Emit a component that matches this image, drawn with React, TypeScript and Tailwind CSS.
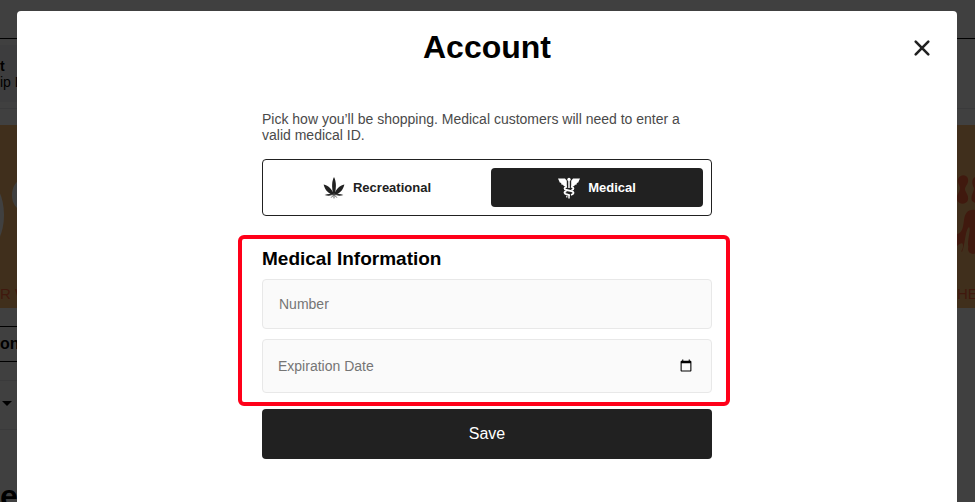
import { useState } from 'react';

type ShopType = 'recreational' | 'medical';

function LeafIcon() {
    return (
        <svg className="h-[22px] w-[22px]" viewBox="0 0 22 22" fill="currentColor" aria-hidden="true">
            <path d="M11 0C13.4 4.500 13.400 11 11.600 17.500h-1.200C8.600 11 8.600 4.500 11 0Z" />
            <path d="M.6 7.500C5.500 8.800 9.400 12.200 10.900 17.800C6.200 17.600 2.200 13.600 .6 7.500Z" />
            <path d="M21.400 7.500C16.500 8.800 12.600 12.200 11.100 17.800C15.800 17.600 19.800 13.600 21.400 7.500Z" />
            <path d="M1.600 18C4.500 16.600 8 16.600 10.900 17.600C8 18.900 4.500 19 1.600 18Z" />
            <path d="M20.400 18C17.500 16.600 14 16.600 11.100 17.600C14 18.900 17.500 19 20.400 18Z" />
            <path d="M11 17v4.400M10.500 18L8.200 20.600M11.500 18l2.300 2.600" stroke="currentColor" strokeWidth=".7" />
        </svg>
    );
}

function CaduceusIcon() {
    return (
        <svg className="h-[22px] w-[22px]" viewBox="0 0 22 22" fill="none" stroke="currentColor" aria-hidden="true">
            <path d="M0 1.500h7L8.800 3.800v5.200H5.800L5 7.800H3.600L3 5.800H1.900Z" fill="currentColor" stroke="none" />
            <path d="M22 1.500h-7L13.200 3.800v5.200h3L17 7.800h1.400L19 5.800h1.100Z" fill="currentColor" stroke="none" />
            <circle cx="11" cy="2.500" r="1.700" fill="currentColor" stroke="none" />
            <path d="M11 4v7M11 18.500v3" strokeWidth="1.500" />
            <path d="M9 9.500C5.800 10.200 5.800 12.400 8.500 13L13.500 14.200C16.400 15 16 17.400 13 17.800" strokeWidth="1.800" />
            <path d="M13 9.500C16.200 10.200 16.200 12.400 13.500 13M8.500 14.200C5.600 15 6 17 9 17.500L12 18.300" strokeWidth="1.800" />
            <path d="M8.200 19.800h1.200" strokeWidth="1.400" />
        </svg>
    );
}

/* Storefront that stays visible around the dialog */
function Storefront() {
    return (
        <div className="h-screen overflow-hidden bg-white text-black" aria-hidden="true">
            <div className="h-[39px] border-b border-black"></div>
            <div className="flex h-[70px] items-start border-b border-gray-200 pt-1.5">
                <div className="h-[57px] w-40 bg-gray-100 pt-[13px]">
                    <p className="text-sm leading-4 font-bold">t</p>
                    <p className="text-sm leading-4">ip D</p>
                </div>
            </div>

            <div className="mt-4 flex h-[183px] flex-col justify-between bg-[#ffbc70]">
                <div className="flex justify-between">
                    <svg className="h-[150px] w-[18px]" viewBox="0 0 18 150">
                        <ellipse cx="-14" cy="90" rx="18" ry="34" fill="#fff" />
                        <ellipse cx="22" cy="70" rx="10" ry="15" fill="#fff" />
                    </svg>
                    <svg className="h-[150px] w-[18px]" viewBox="0 0 18 150" fill="#ff6438">
                        <path d="M1 54C3 49 10 49 11 54C12 59 8 61 8 64C8 67 12 70 11 75C9 80 2 80 0 75V71C1 68 3 66 3 63C3 60 0 58 1 54Z" />
                        <path d="M18 52C14 54 15 60 17 63C17 67 13 71 15 76L18 78Z" />
                        <path d="M18 85C11 84 8 88 7 95C6 103 5 108 0 109V121C4 118 6 117 6 121C6 125 3 126 5 127C8 122 8 105 12 102C14 104 11 112 11 119C11 124 14 126 18 125Z" />
                        <circle cx="16" cy="124" r="5" />
                    </svg>
                </div>
                <div className="flex justify-between pb-1 text-[15px] leading-5 text-[#ff6438]">
                    <span className="whitespace-nowrap">R W</span>
                    <span className="w-[18px] whitespace-nowrap">HE</span>
                </div>
            </div>

            <div className="mt-[18px] h-9 w-40 border-y border-black text-base leading-[34px] font-bold">on</div>
            <div className="mt-[18px] flex h-[50px] w-40 items-center border-y border-gray-200 pb-1 pl-0.5">
                <svg className="h-[5px] w-2.5" viewBox="0 0 10 5">
                    <path d="M0 0h10L5 5Z" />
                </svg>
            </div>
            <p className="mt-[46px] text-[32px] leading-10 font-bold">e</p>
        </div>
    );
}

export default function App() {
    const [shopType, setShopType] = useState<ShopType>('medical');
    const [expiration, setExpiration] = useState('');

    const optionClass = (type: ShopType) =>
        shopType === type ? 'bg-[#212121] text-white' : 'bg-white text-[#212121]';

    return (
        <div className="font-['Liberation_Sans',Arial,sans-serif]">
            <Storefront />

            <div className="fixed inset-0 overflow-hidden bg-black/75 pt-[11px] pr-[18px] pl-[17px]">
                <div role="dialog" aria-modal="true" aria-labelledby="account-title" className="min-h-screen rounded bg-white">
                    <header className="grid grid-cols-[1fr_auto_1fr] items-center px-[26px] pt-[18px]">
                        <h1 id="account-title" className="col-start-2 text-[32px] leading-9 font-bold text-black">
                            Account
                        </h1>
                        <button type="button" aria-label="Close" className="justify-self-end pt-0.5 text-[#212121]">
                            <svg className="h-[18px] w-[18px]" viewBox="0 0 18 18" stroke="currentColor" strokeWidth="2.600" strokeLinecap="round">
                                <path d="M2.700 2.700l12.600 12.600M15.300 2.700L2.700 15.300" />
                            </svg>
                        </button>
                    </header>

                    <form className="mx-auto mt-[46px] max-w-[450px]" onSubmit={(e) => e.preventDefault()}>
                        <p className="text-sm leading-4 text-[#4a4a4a]">
                            Pick how you’ll be shopping. Medical customers will need to enter a valid medical ID.
                        </p>

                        <div className="mt-4 grid grid-cols-2 gap-2 rounded border border-[#212121] p-2">
                            <button
                                type="button"
                                aria-pressed={shopType === 'recreational'}
                                onClick={() => setShopType('recreational')}
                                className={`flex h-[39px] items-center justify-center gap-2 rounded text-[13px] font-bold ${optionClass('recreational')}`}
                            >
                                <LeafIcon />
                                Recreational
                            </button>
                            <button
                                type="button"
                                aria-pressed={shopType === 'medical'}
                                onClick={() => setShopType('medical')}
                                className={`flex h-[39px] items-center justify-center gap-2 rounded text-[13px] font-bold ${optionClass('medical')}`}
                            >
                                <CaduceusIcon />
                                Medical
                            </button>
                        </div>

                        {/* Medical ID fields */}
                        <section className="mt-[19px] -mr-[18px] -ml-6 rounded-md border-4 border-[#ff0019] pt-[9px] pr-3.5 pb-[9px] pl-5">
                            <h2 className="text-[19px] leading-[22px] font-bold text-black">Medical Information</h2>
                            <input
                                type="text"
                                aria-label="Number"
                                placeholder="Number"
                                className="mt-[9px] block h-[50px] w-full rounded border border-[#e8e8e8] bg-[#fafafa] px-4 text-sm text-[#212121] placeholder:text-[#757575]"
                            />
                            <div className="relative mt-2.5">
                                <input
                                    id="expiration"
                                    type="date"
                                    value={expiration}
                                    onChange={(e) => setExpiration(e.target.value)}
                                    className={`block h-[54px] w-full rounded border border-[#e8e8e8] bg-[#fafafa] px-4 text-sm ${expiration ? 'text-[#212121]' : 'text-transparent'}`}
                                />
                                {!expiration && (
                                    <label htmlFor="expiration" className="pointer-events-none absolute inset-y-0 left-4 flex items-center text-sm text-[#757575]">
                                        Expiration Date
                                    </label>
                                )}
                            </div>
                        </section>

                        <button type="submit" className="mt-[3px] h-[50px] w-full rounded bg-[#212121] text-base text-white">
                            Save
                        </button>
                    </form>
                </div>
            </div>
        </div>
    );
}
